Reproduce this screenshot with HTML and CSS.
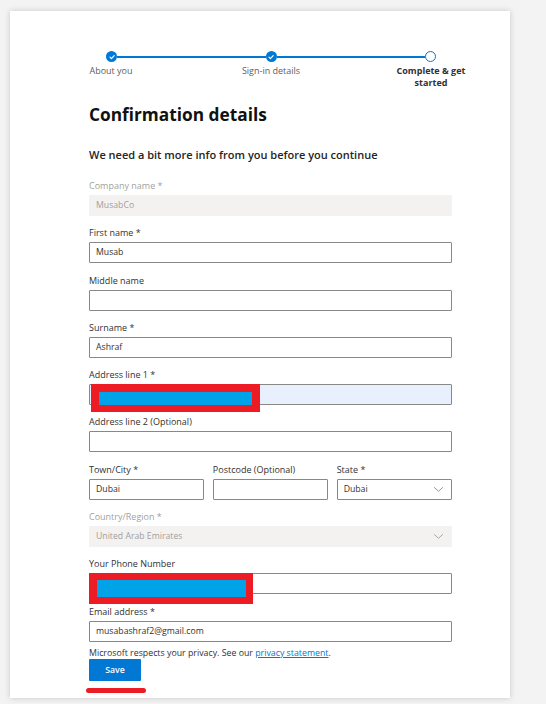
FILE: index.html
```html
<!DOCTYPE html>
<html lang="en">
<head>
<meta charset="utf-8">
<title>Confirmation details</title>
<link rel="stylesheet" href="styles.css">
</head>
<body>
<div class="page">
  <div class="card">
    <div class="stepper">
      <div class="track">
        <span class="dot done"><svg viewBox="0 0 10 10" width="10" height="10"><path d="M3 5.2 L4.4 6.6 L7.2 3.6" fill="none" stroke="#fff" stroke-width="1.2" stroke-linecap="round" stroke-linejoin="round"/></svg></span>
        <span class="line"></span>
        <span class="dot done"><svg viewBox="0 0 10 10" width="10" height="10"><path d="M3 5.2 L4.4 6.6 L7.2 3.6" fill="none" stroke="#fff" stroke-width="1.2" stroke-linecap="round" stroke-linejoin="round"/></svg></span>
        <span class="line"></span>
        <span class="dot todo"></span>
      </div>
      <div class="steps">
        <span class="step">About you</span>
        <span class="step">Sign-in details</span>
        <span class="step current">Complete &amp; get<br>started</span>
      </div>
    </div>

    <h1 class="title">Confirmation details</h1>
    <h2 class="subtitle">We need a bit more info from you before you continue</h2>

    <div class="form">
      <div class="field">
        <div class="label disabled-label">Company name *</div>
        <div class="input disabled">MusabCo</div>
      </div>
      <div class="field">
        <div class="label">First name *</div>
        <div class="input">Musab</div>
      </div>
      <div class="field">
        <div class="label">Middle name</div>
        <div class="input"></div>
      </div>
      <div class="field">
        <div class="label">Surname *</div>
        <div class="input">Ashraf</div>
      </div>
      <div class="field">
        <div class="label">Address line 1 *</div>
        <div class="input autofill">
          <span class="redact redact-address"><span class="redact-fill"></span></span>
        </div>
      </div>
      <div class="field">
        <div class="label">Address line 2 (Optional)</div>
        <div class="input"></div>
      </div>
      <div class="field row3">
        <div class="col">
          <div class="label">Town/City *</div>
          <div class="input">Dubai</div>
        </div>
        <div class="col">
          <div class="label">Postcode (Optional)</div>
          <div class="input"></div>
        </div>
        <div class="col">
          <div class="label">State *</div>
          <div class="input select">Dubai<svg class="chev" viewBox="0 0 12 8" width="11" height="7"><path d="M1 1.5 L6 6 L11 1.5" fill="none" stroke="#8a8886" stroke-width="1"/></svg></div>
        </div>
      </div>
      <div class="field">
        <div class="label disabled-label">Country/Region *</div>
        <div class="input disabled select">United Arab Emirates<svg class="chev" viewBox="0 0 12 8" width="11" height="7"><path d="M1 1.5 L6 6 L11 1.5" fill="none" stroke="#a19f9d" stroke-width="1"/></svg></div>
      </div>
      <div class="field">
        <div class="label">Your Phone Number</div>
        <div class="input">
          <span class="redact redact-phone"><span class="redact-fill"></span></span>
        </div>
      </div>
      <div class="field email">
        <div class="label">Email address *</div>
        <div class="input">musabashraf2@gmail.com</div>
      </div>
      <p class="privacy">Microsoft respects your privacy. See our <a href="#">privacy statement</a>.</p>
      <button class="save" type="button">Save</button>
      <div class="scribble"></div>
    </div>
  </div>
</div>
</body>
</html>
```

FILE: styles.css
```css
* { box-sizing: border-box; }

html, body {
  margin: 0;
  padding: 0;
}

body {
  background: #f3f3f3;
  font-family: "Open Sans", "Noto Sans", "Liberation Sans", sans-serif;
  color: #323130;
}

.page {
  padding: 11px 0 0 10px;
  height: 704px;
  overflow: hidden;
}

.card {
  width: 500px;
  height: 687px;
  background: #ffffff;
  box-shadow: 0 0 6px rgba(0, 0, 0, 0.18);
  padding: 40px 58px 0 79px;
}

/* Stepper */
.stepper {
  display: flex;
  flex-direction: column;
}

.track {
  display: flex;
  align-items: center;
  margin-left: 17px;
  width: 330px;
  height: 11px;
}

.dot {
  width: 11px;
  height: 11px;
  border-radius: 50%;
  flex: none;
  display: flex;
  align-items: center;
  justify-content: center;
}

.dot.done {
  background: #0078d4;
}

.dot.todo {
  background: #fff;
  border: 1.5px solid #0078d4;
}

.line {
  flex: 1;
  height: 2px;
  background: #0078d4;
}

.steps {
  display: flex;
  justify-content: space-between;
  margin-left: -28px;
  width: 420px;
  margin-top: 3px;
}

.step {
  width: 100px;
  text-align: center;
  font-size: 9px;
  line-height: 12px;
  color: #605e5c;
}

.step.current {
  font-weight: 700;
  color: #323130;
}

/* Headings */
.title {
  margin: 14px 0 0 0;
  font-size: 17.3px;
  line-height: 24px;
  font-weight: 700;
  color: #111;
}

.subtitle {
  margin: 20px 0 0 0;
  font-size: 11px;
  line-height: 16px;
  font-weight: 600;
  color: #252423;
}

/* Form */
.form {
  margin-top: 16px;
  width: 363px;
}

.field {
  margin-bottom: 10.3px;
}

.field.email {
  margin-bottom: 5px;
}

.label {
  font-size: 9px;
  line-height: 14px;
  margin-bottom: 2px;
  color: #323130;
}

.disabled-label {
  color: #a19f9d;
}

.input {
  position: relative;
  height: 21px;
  border: 1px solid #8a8886;
  border-radius: 1px;
  background: #fff;
  font-size: 8.7px;
  line-height: 19px;
  padding: 0 6px;
  color: #323130;
  display: flex;
  align-items: center;
}

.input.disabled {
  background: #f3f2f1;
  border-color: #f3f2f1;
  color: #a19f9d;
}

.input.autofill {
  background: #e8f0fe;
}

.input.select {
  justify-content: space-between;
}

.chev {
  flex: none;
  margin-right: 1px;
}

.row3 {
  display: grid;
  grid-template-columns: repeat(3, 1fr);
  column-gap: 8.5px;
}

/* Redaction marks drawn over the inputs */
.redact {
  position: absolute;
  background: #ed1c24;
  display: block;
}

.redact-address {
  left: 1px;
  top: -1px;
  width: 169px;
  height: 28px;
  padding: 8px 8px 7px 8px;
}

.redact-phone {
  left: -1px;
  top: -1px;
  width: 164px;
  height: 31px;
  padding: 7px 7px 7px 8px;
}

.redact-fill {
  display: block;
  width: 100%;
  height: 100%;
  background: #00a2e8;
}

.privacy {
  margin: 0;
  font-size: 8.8px;
  line-height: 12px;
  color: #323130;
}

.privacy a {
  color: #0078d4;
  text-decoration: underline;
}

.save {
  display: block;
  margin-top: 0;
  width: 52px;
  height: 22px;
  border: none;
  border-radius: 1px;
  background: #0078d4;
  color: #fff;
  font-family: inherit;
  font-size: 8.7px;
  font-weight: 600;
  padding: 0;
}

.scribble {
  margin-top: 7px;
  margin-left: -3px;
  width: 60px;
  height: 5px;
  border-radius: 3px;
  background: #ed1c24;
}
```
